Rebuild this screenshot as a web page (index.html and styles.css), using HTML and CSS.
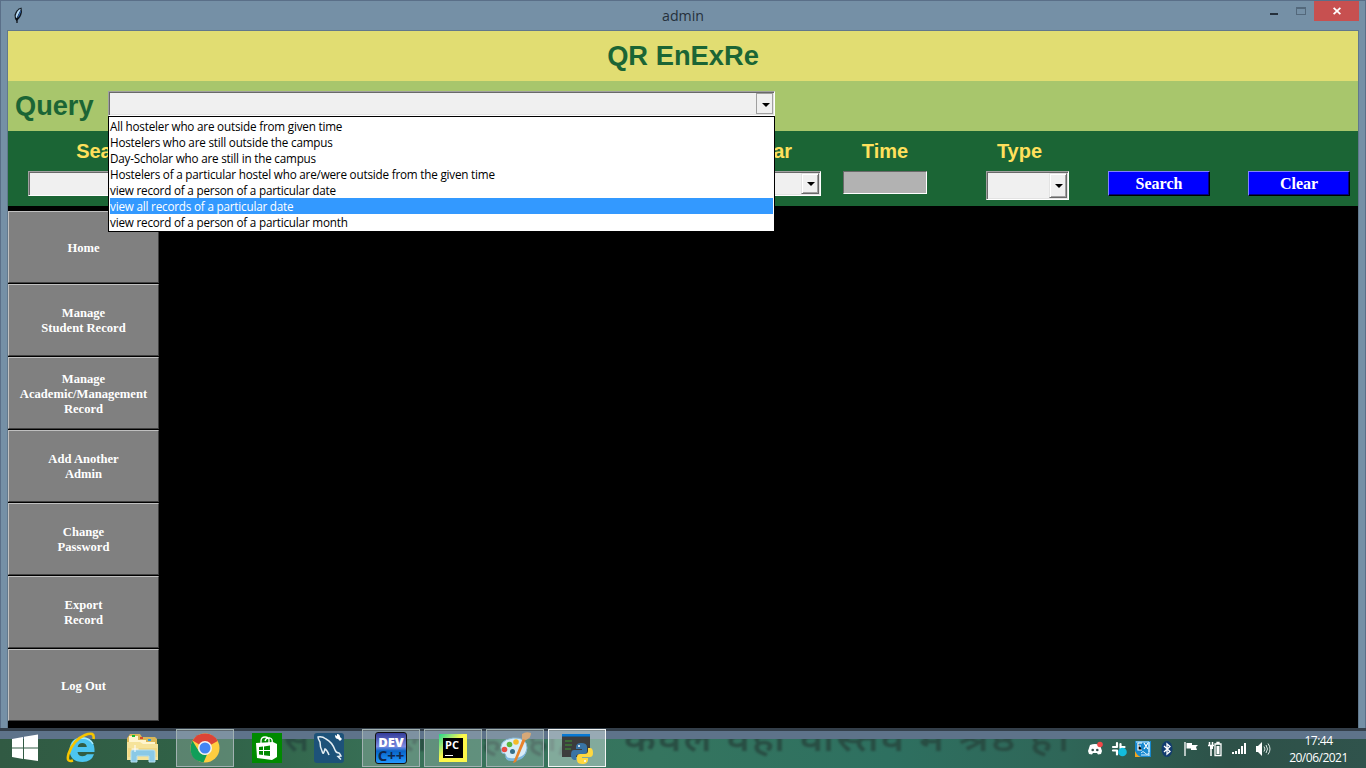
FILE: index.html
```html
<!DOCTYPE html>
<html lang="en">
<head>
<meta charset="utf-8">
<title>admin</title>
<link rel="stylesheet" href="styles.css">
</head>
<body>
<div class="desktop">
  <section class="window">
    <header class="titlebar">
      <svg class="feather" width="10" height="17" viewBox="0 0 10 17"><path d="M8.500.5Q3 2 1.500 8l.5 4 1.500 2Q8 11 9 5z" fill="#111820"/><path d="M7.500 1.800Q3.500 4 2.700 9l.6 2.500L7.500 3z" fill="#b8dcf5"/><path d="M7.800 3 4 11.500Q6.800 9 7.800 5z" fill="#3674c8"/><path d="M4 11v5" stroke="#05080c" stroke-width="1.200"/></svg>
      <h1 class="caption">admin</h1>
      <div class="controls">
        <span class="minimize"></span>
        <span class="maximize"></span>
        <span class="close"><svg width="8" height="8" viewBox="0 0 8 8"><path d="M.6.8l6.800 6.400M7.400.8.6 7.200" stroke="#fff" stroke-width="1.800"/></svg></span>
      </div>
    </header>
    <main class="client">
      <div class="brand">QR EnExRe</div>
      <div class="query">
        <label class="query-label">Query</label>
        <div class="combo query-combo">
          <span class="arrow flat"></span>
          <ul class="options">
            <li>All hosteler who are outside from given time</li>
            <li>Hostelers who are still outside the campus</li>
            <li>Day-Scholar who are still in the campus</li>
            <li>Hostelers of a particular hostel who are/were outside from the given time</li>
            <li>view record of a person of a particular date</li>
            <li class="selected">view all records of a particular date</li>
            <li>view record of a person of a particular month</li>
          </ul>
        </div>
      </div>
      <div class="filters">
        <div class="field search"><label>Search</label><div class="entry"></div></div>
        <div class="field year"><label>Year</label><div class="combo year-combo"><span class="arrow"></span></div></div>
        <div class="field time"><label>Time</label><div class="entry disabled"></div></div>
        <div class="field type"><label>Type</label><div class="combo type-combo"><span class="arrow"></span></div></div>
        <button class="action">Search</button>
        <button class="action">Clear</button>
      </div>
      <div class="content">
        <nav class="sidebar">
          <button>Home</button>
          <button>Manage<br>Student Record</button>
          <button>Manage<br>Academic/Management<br>Record</button>
          <button>Add Another<br>Admin</button>
          <button>Change<br>Password</button>
          <button>Export<br>Record</button>
          <button>Log Out</button>
        </nav>
      </div>
    </main>
  </section>
  <footer class="taskbar">
    <div class="wallpaper">
      <span class="motto m1">स</span>
      <span class="motto m2">ल</span>
      <span class="motto m3">ह</span>
      <span class="motto m4">हो,</span>
      <span class="motto m5">केवल वही वास्तव में श्रेष्ठ है।</span>
    </div>
    <div class="start"><svg width="28" height="28" viewBox="0 0 28 28" fill="#fff"><path d="M1 5l11-2v10.500H1zM13 2.800 27 .5v13H13zM1 14.500h11V25L1 23zM13 14.500h14V27L13 25z"/></svg></div>
    <div class="task">
      <svg width="32" height="32" viewBox="0 0 32 32"><path d="M29.500 20H12.500q.8 4.300 5 4.300 3 0 4.500-2H29q-2.500 7.700-11.500 7.700Q5 30 4.500 18 5 6 17 5q13 .5 12.500 15zM12.700 15h9.100q-.5-4-4.500-4t-4.600 4z" fill="#4cc5f0" fill-rule="evenodd"/><path d="M6 16Q8 6 18 6q7 .5 10 6" fill="none" stroke="#a6ebff" stroke-width="1.500"/><path d="M8 28.500Q1 31 3.500 22 8 8 20 3q10-4 8.500 4" fill="none" stroke="#f6c500" stroke-width="2.600"/></svg>
    </div>
    <div class="task">
      <svg width="34" height="32" viewBox="0 0 34 32"><path d="M2 5l2-3h10l2 3h13l2 2v21H1V6z" fill="#d9b758"/><path d="M3 4h9v4h8v2h9v4H3z" fill="#fff5ce"/><path d="M1 10h13l3 2h15v16H1z" fill="#f6e39a"/><path d="M2 16h29v9H2z" fill="#f1d477" opacity=".65"/><path d="M6 3h3v2H6z" fill="#15bb32"/><path d="M14 5h3v2h-3z" fill="#d94b29"/><path d="M22 7h3v2h-3z" fill="#279de8"/><path d="M5 30V20q0-2 2-2h20q2 0 2 2v10h-6v-6H11v6z" fill="#8bc9e6" stroke="#b5dff0"/><path d="M9 13v7M5.500 17h7" stroke="#fff"/></svg>
    </div>
    <div class="task open">
      <svg width="30" height="30" viewBox="0 0 30 30"><circle cx="15" cy="15" r="14.500" fill="#ffcd40"/><path d="M15 15 2.500 7.500Q6.500.5 15 .5q9 0 12.700 7.500z" fill="#dc4437"/><path d="M2.500 7.700 9 18.500q3 4 8 3L13.500 29.500Q.5 27.500.5 15q0-4 2-7.300z" fill="#109e59"/><circle cx="15" cy="15" r="7" fill="#f3f3f3"/><circle cx="15" cy="15" r="5.500" fill="#4285f4"/></svg>
    </div>
    <div class="task store">
      <svg width="30" height="30" viewBox="0 0 30 30"><path d="M0 0h30v30H0z" fill="#008a00"/><path d="M4 10l17-1 4 2v13l-5 3-15-2z" fill="#fff"/><path d="M9 11V8q0-4 4-4t4 3v3M13 8q1-4 5-3 3 1 2 5" fill="none" stroke="#fff" stroke-width="1.300"/><path d="M7 14l4-.5V17H7zM12 13.400l6-.8V17h-6zM7 18h4v4l-4-.5zM12 18h6v5l-6-.8z" fill="#008a00"/></svg>
    </div>
    <div class="task">
      <svg width="30" height="30" viewBox="0 0 30 30"><rect width="30" height="30" rx="3" fill="#1d5279"/><path d="M21 17Q18 9 12 6 8 3 4 4q0 2 2 5 0 5 2 9 1 4 2 1l1-3q2 1 4 6M21 17q1 3 4 3 1 1 2 3l-3 .5 3 3" fill="none" stroke="#e5eef3" stroke-width="1.500"/><path d="M21 2q0 4 3 4l2 2 2-2-2-2q0-3-3-3v2z" fill="#fff"/></svg>
    </div>
    <div class="task open">
      <div class="dev"><b>DEV</b><i>C++</i></div>
    </div>
    <div class="task open">
      <div class="pycharm"><b>PC</b></div>
    </div>
    <div class="task open">
      <svg width="34" height="32" viewBox="0 0 34 32"><path d="M15 6Q29 5 29 16q-1 12-15 12-7 0-6-4 0-3-4-3Q-1 8 15 6z" fill="#d8edf8" stroke="#86b9d7"/><path d="M8 24q2 3 9 2 9-1 11-7-1 10-14 10-7 0-6-5z" fill="#7bb6dc"/><circle cx="6.500" cy="17.500" r="2.800" fill="#e64d43"/><circle cx="11.500" cy="12.500" r="2.800" fill="#5bb63c"/><circle cx="18" cy="10" r="2.800" fill="#f5bb27"/><circle cx="14.500" cy="19.500" r="2.500" fill="#356d87"/><path d="M25 6 15 31l3-1L28 7z" fill="#e7832c"/><path d="M24 2q4-3 9-1 0 5-5 7l-4-1z" fill="#d6a878"/></svg>
    </div>
    <div class="task open active">
      <svg width="32" height="32" viewBox="0 0 32 32"><path d="M1 2h28v23H1z" fill="#3d3d3d"/><path d="M1 2h28v2.500H1z" fill="#0879d4"/><path d="M4 9h7M4 13h7M4 17h6" stroke="#3e9a34"/><path d="M20 11q-5 0-5 4v2h6v1h-8q-3 0-3 5 0 4 3 5h2v-3q0-3 4-3h4q3 0 3-3v-4q0-4-6-4z" fill="#3974a5"/><path d="M21 32q6 0 6-4v-2h-6v-1h8q3 0 3-4 0-5-3-5h-2v3q0 3-4 3h-4q-3 0-3 3v3q0 4 5 4z" fill="#ffd840"/><circle cx="18" cy="14" r="1" fill="#fff"/><circle cx="24" cy="29" r="1" fill="#fff"/></svg>
    </div>
    <div class="tray">
      <span><svg width="16" height="16" viewBox="0 0 16 16"><path d="M3 4q5-2 10 0l2 6-1 3-3 .5-1-1.500H6l-1 1.500-3-.5-1-3z" fill="#fff"/><circle cx="5.700" cy="9" r="1.300" fill="#354f4b"/><circle cx="10.300" cy="9" r="1.300" fill="#354f4b"/><circle cx="13" cy="3.500" r="2.800" fill="#f04848"/></svg></span>
      <span><svg width="16" height="16" viewBox="0 0 16 16"><path d="M6 2v4M2 6h4M9.500 3v4M10 6h3.500M2 9.500h4M6 10v3.500" stroke="#fff" stroke-width="2.200" stroke-linecap="round"/><circle cx="11.500" cy="11" r="4.300" fill="#13bddd"/></svg></span>
      <span><svg width="16" height="16" viewBox="0 0 16 16"><path d="M0 0h16v16H0z" fill="#1688cf"/><path d="M3 2h4M3 2v7h4M3 5h3M9 2l4 6M13 2 9 8" stroke="#fff" stroke-width="1.200"/><path d="M0 10q3 6 7 6H0z" fill="#f4a51c"/><path d="M6 12q2-3 4 0t4 0M14 1v10M6 14h8M1 1h13v14" fill="none" stroke="#d4efff"/></svg></span>
      <span><svg width="16" height="16" viewBox="0 0 16 16"><ellipse cx="8" cy="8" rx="5.500" ry="8" fill="#123c70"/><path d="M5 5l6 5.500L8 13V3l3 2.500L5 11" fill="none" stroke="#fff" stroke-width="1.300"/></svg></span>
      <span><svg width="16" height="16" viewBox="0 0 16 16"><path d="M2 1v14" stroke="#fff" stroke-width="1.300"/><path d="M3.500 2H9v2h6l-2 2 1 3H8V7.500H3.500z" fill="#fff"/></svg></span>
      <span><svg width="16" height="16" viewBox="0 0 16 16"><path d="M2.500 1v3M5.500 1v3M1 4.500h6M4 5v10" stroke="#fff" stroke-width="1.500"/><path d="M3 5h3v3H3z" fill="#fff"/><path d="M8 3h6v11.500H8zM10 1.500h2v1h-2z" fill="none" stroke="#fff" stroke-width="1.300"/><path d="M9.500 5h3v8h-3z" fill="#fff"/></svg></span>
      <span><svg width="16" height="16" viewBox="0 0 16 16" fill="#fff"><path d="M1 11h2v2H1zM4 10h2v3H4zM7 8h2v5H7zM10 5h2v8h-2zM13 2h2v11h-2z"/></svg></span>
      <span><svg width="16" height="16" viewBox="0 0 16 16"><path d="M1 5h2l4-4v14l-4-4H1z" fill="#fff"/><path d="M9 5.500q2 2.500 0 5M11 4q3 4 0 8M13 2.500q4 5.500 0 11" fill="none" stroke="#dce7e4"/></svg></span>
    </div>
    <div class="clock">17:44<br>20/06/2021</div>
  </footer>
</div>
</body>
</html>
```
FILE: styles.css
```css
* { box-sizing: border-box; }
body { margin: 0; font-family: "Open Sans", "Noto Sans", sans-serif; }
button { margin: 0; padding: 0; }
.desktop { position: relative; width: 1366px; height: 768px; overflow: hidden; background: #2e604f; }

/* Window frame */
.window { width: 1366px; height: 739px; padding: 0 7px 10px; border: 1px solid #5a6f88; border-bottom: 0; background: #7590a6; }
.titlebar { height: 29px; display: grid; grid-template-columns: 102px 1fr 102px; }
.feather { margin: 6px 0 0 5px; }
.caption { margin: 5px 0 0; font-size: 14.200px; line-height: 20px; font-weight: 400; text-align: center; color: #25303b; }
.controls { display: flex; align-items: flex-start; justify-content: flex-end; margin-right: -1px; }
.minimize { width: 8px; height: 2px; margin: 12px 18px 0 0; background: #25303b; }
.maximize { width: 10px; height: 8px; margin: 6px 8px 0 0; border: 1px solid #53687b; border-top-width: 2px; }
.close { flex: none; width: 45px; height: 20px; background: #c75050; display: flex; align-items: center; justify-content: center; }
.client { height: 699px; width: 1352px; margin-left: -1px; border: solid #61788c; border-width: 1px 1px 0; background: #000; }

.brand { height: 50px; background: #e1dd72; color: #1b6535; font: bold 27.300px/50px "Liberation Sans", sans-serif; text-align: center; }
.query { height: 50px; background: #a8c66c; display: flex; padding: 11px 0 0 7px; }
.query-label { width: 93px; margin-top: -11px; color: #1b6535; font: bold 27.200px/50px "Liberation Sans", sans-serif; }
.combo { background: #f0f0f0; border: 1px solid; border-color: #a0a0a0 #fff #fff #a0a0a0; box-shadow: inset 1px 1px #696969, inset -1px -1px #e3e3e3; display: flex; justify-content: flex-end; }
.arrow { width: 18px; border: 1px solid; border-color: #e3e3e3 #696969 #696969 #e3e3e3; box-shadow: inset 1px 1px #fff, inset -1px -1px #a0a0a0; display: flex; align-items: center; justify-content: center; }
.arrow::after { content: ""; margin-left: 1px; border: 4px solid transparent; border-top-color: #000; border-bottom: 0; }
.arrow.flat { width: 17px; border-color: #a0a0a0; box-shadow: none; }
.arrow.flat::after { margin: 2px 0 0 2px; }
.query-combo { position: relative; width: 667px; height: 25px; padding: 1px; margin-top: -1px; }
.options { position: absolute; z-index: 2; left: -1px; top: 24px; width: 667px; height: 116px; margin: 0; padding: 1px; border: 1px solid #000; background: #fff; list-style: none; font-size: 11.700px; line-height: 16px; letter-spacing: -.2px; white-space: nowrap; color: #000; }
.options li { height: 16px; }
.options .selected { background: #3399ff; color: #fff; }

.filters { height: 75px; padding-left: 20px; background: #1b6535; display: flex; align-items: flex-start; }
.field { flex: none; }
.field label { display: block; height: 40px; color: #ffe05c; font: bold 20px/40px "Liberation Sans", sans-serif; text-align: center; }
.entry { height: 25px; background: #f0f0f0; border: 1px solid; border-color: #a0a0a0 #fff #fff #a0a0a0; box-shadow: inset 1px 1px #696969; }
.entry.disabled { height: 23px; background: #b2b2b2; border-color: #696969 #fff #fff #696969; box-shadow: none; }
.search { width: 163px; }
.year { width: 102px; margin-left: 528px; }
.year label { padding-left: 2px; }
.time { width: 84px; margin-left: 22px; }
.type { width: 83px; margin-left: 59px; }
.type label { padding-right: 16px; }
.year-combo { height: 25px; padding: 1px; }
.type-combo { height: 29px; padding: 1px; }
.action { width: 102px; height: 25px; margin: 40px 0 0 39px; border: 1px solid; border-color: #8080ff #000 #000 #8080ff; box-shadow: inset -1px -1px #000080; background: #00f; color: #fff; font: bold 16px/22px "Liberation Serif", serif; }
.action + .action { margin-left: 38px; }

.content { padding-top: 5px; }
.sidebar { width: 151px; display: flex; flex-direction: column; gap: 1px; }
.sidebar button { height: 72px; padding-top: 2px; border: 1px solid; border-color: #c0c0c0 #404040 #404040 #c0c0c0; background: #808080; color: #fff; font: bold 12.600px/15px "Liberation Serif", serif; }

/* Taskbar lies over the lower edge of the window */
.taskbar { position: absolute; z-index: 1; left: 0; right: 0; bottom: 0; height: 40px; display: flex; background: linear-gradient(#343f4a 3px, #5e738a 3px, #5e738a 11px, transparent 11px); }
.wallpaper { position: absolute; z-index: -1; left: 0; right: 0; top: 11px; height: 29px; overflow: hidden; background: linear-gradient(90deg, #315a43, #306247 15%, #397158 30%, #35755f 48%, #2e7060 65%, #2f6658 78%, #2d5148 90%, #30534c); }
.motto { position: absolute; top: -19px; font: 600 35px/36px "Noto Sans", sans-serif; color: #27483f; white-space: nowrap; filter: blur(1px); opacity: .85; }
.m1 { left: 284px; }
.m2 { left: 402px; }
.m3 { left: 482px; }
.m4 { left: 528px; }
.m5 { left: 624px; letter-spacing: 2px; transform: scaleX(1.130); transform-origin: left; }
.start { width: 50px; padding: 6px 0 0 11px; }
.task { width: 58px; height: 38px; margin: 1px 2px; display: flex; align-items: center; justify-content: center; flex: none; }
.task.store { padding-right: 1px; }
.task.open { border: 1px solid #a2b2b2; background: rgba(220, 235, 230, .25); }
.task.active { border-color: #f2f5f4; background: rgba(220, 235, 230, .46); }
.dev { width: 32px; height: 32px; border: 1px solid #111; border-radius: 3px; background: linear-gradient(#333b99, #7c8be0 45%, #0865c8 60%, #2298ff); text-align: center; font: bold 13px/15px "Open Sans", sans-serif; color: #fff; padding-top: 3px; }
.dev b, .dev i { display: block; height: 13px; line-height: 13px; font-style: normal; }
.dev i { color: #10264c; font-size: 15px; }
.pycharm { width: 28px; height: 28px; padding: 4px; background: linear-gradient(135deg, #21d789, #9be777 25%, #fcf84a 45%); }
.pycharm b { display: block; width: 20px; height: 20px; padding-left: 2px; background: linear-gradient(#fff, #fff) 2px 17px / 8px 1px no-repeat #000; color: #fff; font: bold 11px/13px "Open Sans", sans-serif; }
.tray { display: flex; margin-left: auto; padding-top: 13px; }
.tray span { width: 24px; height: 16px; text-align: center; line-height: 0; }
.clock { width: 91px; padding: 4px 4px 0 0; color: #fff; font-size: 12px; line-height: 17px; text-align: center; letter-spacing: -.5px; }
```
